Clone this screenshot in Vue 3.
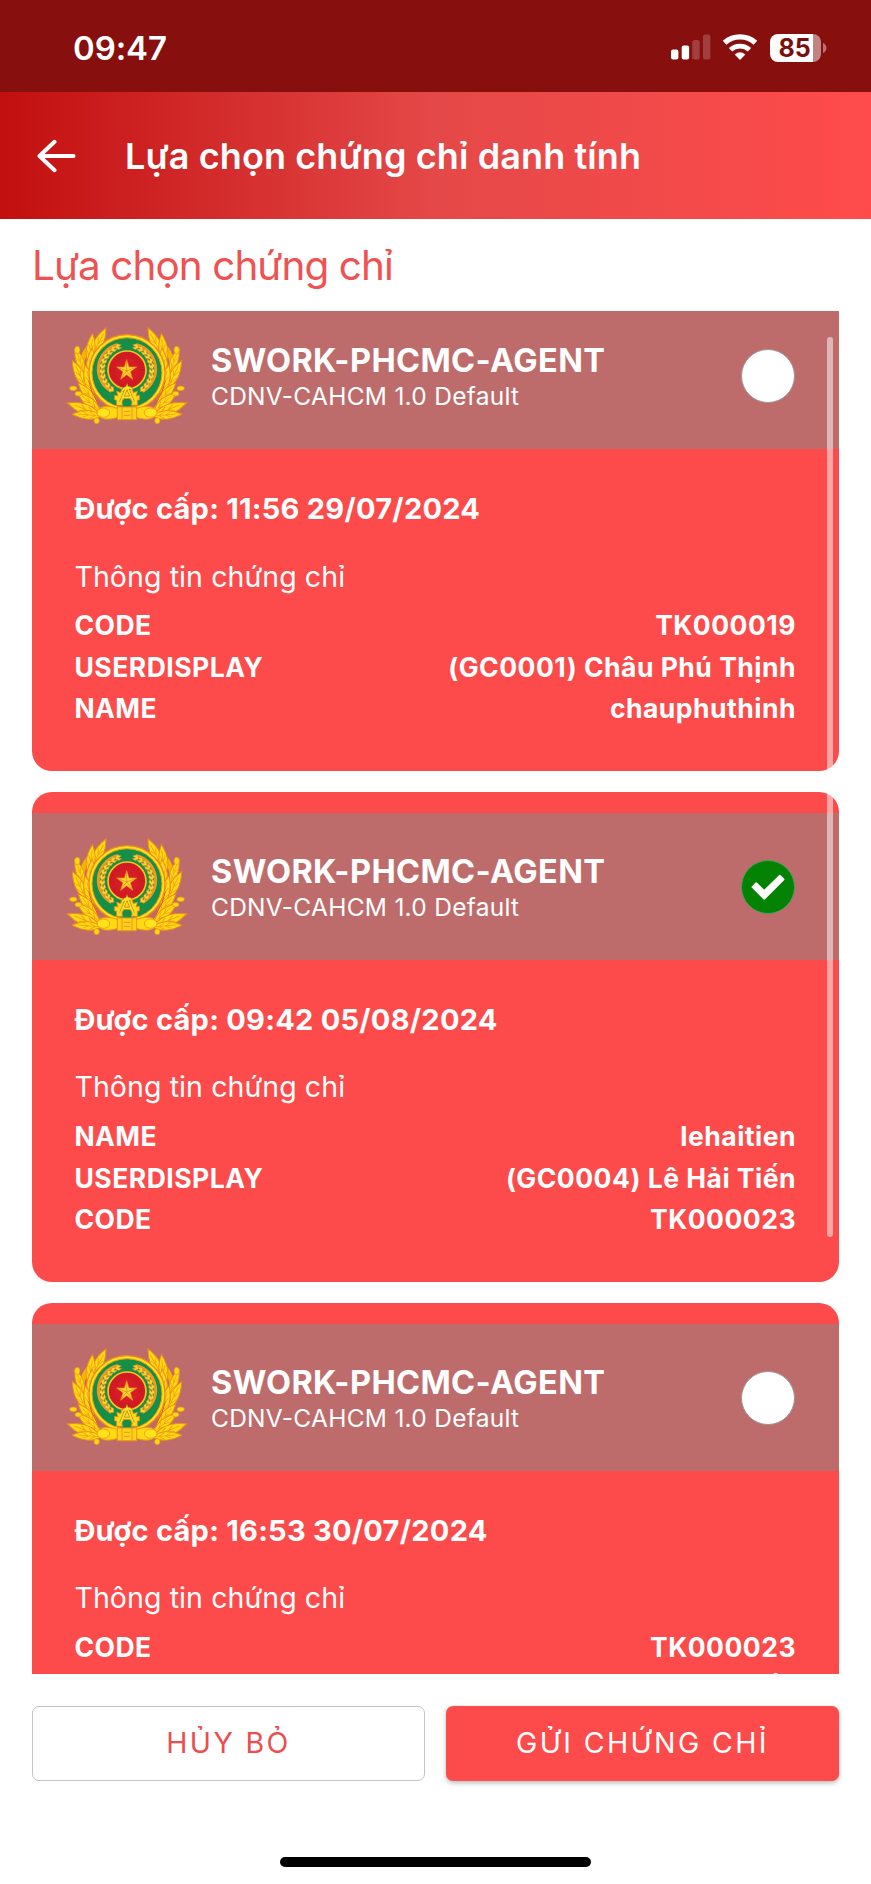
<script setup>
const cards = [
  {
    issued: '11:56 29/07/2024',
    selected: false,
    rows: [
      ['CODE', 'TK000019'],
      ['USERDISPLAY', '(GC0001) Châu Phú Thịnh'],
      ['NAME', 'chauphuthinh'],
    ],
  },
  {
    issued: '09:42 05/08/2024',
    selected: true,
    rows: [
      ['NAME', 'lehaitien'],
      ['USERDISPLAY', '(GC0004) Lê Hải Tiến'],
      ['CODE', 'TK000023'],
    ],
  },
  {
    issued: '16:53 30/07/2024',
    selected: false,
    rows: [
      ['CODE', 'TK000023'],
      ['USERDISPLAY', '(GC0004) Lê Hải Tiến'],
    ],
  },
]

const leaves = [
  { x: 92, y: 140, r: 30, s: 1.4 },
  { x: 84, y: 160, r: 10, s: 1.3 },
  { x: 70, y: 190, r: -18, s: 1.15 },
  { x: 86, y: 205, r: 8, s: 1.3 },
  { x: 76, y: 236, r: -24, s: 1.35 },
  { x: 96, y: 258, r: -12, s: 1.4 },
  { x: 110, y: 288, r: -38, s: 1.3 },
  { x: 118, y: 306, r: -48, s: 1.3 },
  { x: 120, y: 320, r: -66, s: 1.58 },
  { x: 122, y: 320, r: -84, s: 1.3 },
]
const grains = Array.from({ length: 11 }, (_, i) => -52 + i * 12)
</script>

<template>
  <div class="screen">
    <div class="status">
      <span class="clock">09:47</span>
      <div class="indicators">
        <svg class="signal" width="40" height="26" viewBox="0 0 40 26">
          <rect x="0" y="15.5" width="7.4" height="10" rx="2" fill="#fff" />
          <rect x="10.7" y="11.5" width="7.4" height="14" rx="2" fill="#fff" />
          <rect x="21.3" y="6" width="7.4" height="19.5" rx="2" fill="#a13e3e" />
          <rect x="32" y="0.5" width="7.4" height="25" rx="2" fill="#a13e3e" />
        </svg>
        <svg class="wifi" width="34" height="26" viewBox="0 0 34 26">
          <g fill="none" stroke="#fff">
            <path d="M1.6 8.7A23.2 23.2 0 0 1 32.4 8.7" stroke-width="5.4" />
            <path d="M7.5 15.8A14 14 0 0 1 26.5 15.8" stroke-width="4.9" />
          </g>
          <path d="M17 26L11.7 20.6Q17 16 22.3 20.6Z" fill="#fff" />
        </svg>
        <div class="battery">85</div>
        <svg class="nub" width="4" height="10" viewBox="0 0 4 10"><path d="M0 0Q3.4 1.4 3.4 5T0 10Z" fill="#b86f6d" /></svg>
      </div>
    </div>

    <header class="bar">
      <svg class="back" width="40" height="34" viewBox="0 0 40 34">
        <path d="M36.5 17H2.5M17.5 2.8L2.5 17L17.5 31.2" fill="none" stroke="#fff" stroke-width="4" stroke-linecap="round" stroke-linejoin="round" />
      </svg>
      <h1>Lựa chọn chứng chỉ danh tính</h1>
    </header>

    <h2>Lựa chọn chứng chỉ</h2>

    <main class="list">
      <div class="stack">
        <section v-for="(card, i) in cards" :key="i" class="card">
          <div class="band">
            <svg class="emblem" width="124" height="100" viewBox="13 50 372 300">
              <g v-for="side in 2" :key="side" :transform="side === 2 ? 'translate(398 0) scale(-1 1)' : ''">
                <path d="M120 306Q66 260 62 196T96 104" fill="none" stroke="#f7b500" stroke-width="15" />
                <g stroke="#f08a1c" stroke-width="2.2" fill="#ffdc10">
                  <g v-for="(l, k) in leaves" :key="k" :transform="`translate(${l.x} ${l.y}) rotate(${l.r}) scale(${l.s})`">
                    <path d="M0 0Q-20-25-3-68Q20-28 0 0Z" />
                    <path d="M0 0L-1-54M-1-14L-9-28M-1-14L7-28M-1-30L-7-42M-1-30L5-42" fill="none" stroke="#f29a18" stroke-width="1.7" />
                  </g>
                  <ellipse cx="50" cy="122" rx="8" ry="11" />
                  <ellipse cx="38" cy="237" rx="11" ry="7" />
                  <ellipse cx="53" cy="253" rx="10" ry="7" />
                  <ellipse cx="108" cy="334" rx="8" ry="9" />
                </g>
                <path d="M84 214Q91 250 113 284" fill="none" stroke="#e8551e" stroke-width="3" />
              </g>
              <circle cx="199" cy="190" r="114" fill="#ffe21a" stroke="#f08a1c" stroke-width="4" />
              <circle cx="199" cy="190" r="105" fill="#158f48" stroke="#e89a1a" stroke-width="3" />
              <g v-for="side in 2" :key="'w' + side" :transform="side === 2 ? 'translate(398 0) scale(-1 1)' : ''">
                <path d="M152 246A76 76 0 0 1 170 106" fill="none" stroke="#e99b23" stroke-width="9" />
                <path v-for="g in grains" :key="g" :transform="`rotate(${g} 199 182)`" d="M124 190L115 180L123 170L125 180L131 172L133 182Z" fill="#f9d32e" stroke="#e88d22" stroke-width="1.5" />
              </g>
              <circle cx="199" cy="182" r="57" fill="#d61c24" stroke="#f6c31e" stroke-width="5" />
              <circle cx="199" cy="182" r="44" fill="none" stroke="#a9161c" stroke-width="16" stroke-dasharray="2 5" opacity=".45" />
              <path d="M198 151L205 173H228L209 187L216 210L198 196L180 210L187 187L168 173H191Z" fill="#ffd52c" stroke="#e8901c" stroke-width="2" />
              <path d="M198 155V185L214 206M198 185L181 206M198 185L172 175M198 185L224 175" stroke="#c98c18" stroke-width="2" fill="none" />
              <path d="M168 288V272H162V258L172 260L168 246L180 250L184 238H214L218 250L230 246L226 260L236 258V272H230V288H212A15 15 0 1 0 186 288Z" fill="#ffd91c" stroke="#e8901c" stroke-width="2.5" />
              <path d="M180 278L199 232L218 278M185 264H214M184 244Q199 226 214 240" fill="none" stroke="#b88714" stroke-width="9" />
              <path d="M180 278L199 232L218 278M185 264H214M184 244Q199 226 214 240" fill="none" stroke="#ffe02a" stroke-width="5" />
              <path d="M122 294Q142 286 172 298Q199 290 226 298Q256 286 276 294Q296 310 276 326Q256 334 226 324H172Q142 334 122 326Q102 310 122 294Z" fill="#ffda12" stroke="#ef941a" stroke-width="3" />
              <ellipse cx="128" cy="310" rx="19" ry="14" fill="#ffe41c" stroke="#ef941a" stroke-width="2.5" />
              <ellipse cx="270" cy="310" rx="19" ry="14" fill="#ffe41c" stroke="#ef941a" stroke-width="2.5" />
              <path d="M170 293H228V331H170Z" fill="#ffd21a" stroke="#ef941a" stroke-width="3" />
              <path d="M184 293V331M214 293V331M190 306H208M190 318H208" stroke="#ef941a" stroke-width="3" />
            </svg>
            <div class="names">
              <strong>SWORK-PHCMC-AGENT</strong>
              <span class="sub">CDNV-CAHCM 1.0 Default</span>
            </div>
            <div class="radio" :class="{ on: card.selected }">
              <svg v-if="card.selected" width="34" height="27" viewBox="0 0 34 27">
                <path d="M1.8 13L5.2 9.6L13.2 17.4L28.8 2L32.2 5.4L13.2 24.4Z" fill="#fff" stroke="#fff" stroke-width="2.4" stroke-linejoin="round" />
              </svg>
            </div>
          </div>
          <div class="body">
            <p class="issued">Được cấp: {{ card.issued }}</p>
            <p class="info">Thông tin chứng chỉ</p>
            <div v-for="row in card.rows" :key="row[0]" class="row">
              <span>{{ row[0] }}</span><span>{{ row[1] }}</span>
            </div>
          </div>
        </section>
      </div>
      <div class="scrollbar"></div>
    </main>

    <footer class="actions">
      <button class="cancel">HỦY BỎ</button>
      <button class="send">GỬI CHỨNG CHỈ</button>
    </footer>
    <div class="home"></div>
  </div>
</template>

<style>
body {
  margin: 0;
  background: #fff;
}
</style>

<style scoped>
.screen {
  width: 871px;
  height: 1884px;
  overflow: hidden;
  display: flex;
  flex-direction: column;
  font-family: Inter, "Liberation Sans", sans-serif;
  position: relative;
  background: #fff;
}
.status {
  height: 92.4px;
  flex: none;
  background: #870f0d;
  display: flex;
  justify-content: space-between;
  box-sizing: border-box;
  padding: 0 44.5px 0 73px;
  color: #fff;
}
.clock {
  font-size: 33px;
  font-weight: 600;
  line-height: 40px;
  margin-top: 28px;
  letter-spacing: -0.1px;
}
.indicators {
  display: flex;
  align-items: flex-start;
  padding-top: 34px;
}
.wifi {
  margin-left: 12.5px;
}
.battery {
  margin: -0.5px 2px 0 12.5px;
  width: 51px;
  height: 28px;
  border-radius: 8px;
  background: linear-gradient(to right, #fff 43px, #c08583 43px);
  color: #7a0f0d;
  font-weight: 700;
  font-size: 25px;
  line-height: 28px;
  text-indent: 9px;
}
.nub {
  margin-top: 8.5px;
}
.bar {
  height: 126.3px;
  flex: none;
  background: linear-gradient(90deg, #c20f0f 0%, #e54848 50%, #ff4b4b 100%);
  display: flex;
  align-items: center;
  color: #fff;
}
.back {
  margin-left: 37px;
}
h1 {
  margin: 0 0 0 48px;
  font-size: 36px;
  font-weight: 600;
  line-height: 44px;
  letter-spacing: 0.1px;
}
h2 {
  margin: 0;
  height: 92.6px;
  flex: none;
  padding-left: 32px;
  font-size: 40.4px;
  font-weight: 400;
  line-height: 94px;
  letter-spacing: -0.9px;
  color: #ee5253;
}
.list {
  margin: 0 32px;
  height: 1363px;
  flex: none;
  overflow: hidden;
  position: relative;
}
.stack {
  margin-top: -30px;
  display: flex;
  flex-direction: column;
  gap: 20.8px;
}
.card {
  height: 490px;
  flex: none;
  background: #fd4b4b;
  border-radius: 20px;
  box-sizing: border-box;
  padding-top: 21px;
  color: #fff;
}
.band {
  height: 147px;
  background: #be6c6b;
  display: flex;
  align-items: flex-start;
}
.emblem {
  margin: 23.5px 0 0 32.5px;
  flex: none;
  overflow: visible;
}
.names {
  margin: 39px 0 0 22.5px;
  flex: 1;
  display: flex;
  flex-direction: column;
}
.names strong {
  font-size: 32.5px;
  font-weight: 700;
  line-height: 40px;
  letter-spacing: 0.38px;
}
.sub {
  font-size: 24.5px;
  line-height: 31px;
  letter-spacing: 0.27px;
}
.radio {
  width: 54px;
  height: 54px;
  box-sizing: border-box;
  margin: 47px 44px 0 0;
  border-radius: 50%;
  border: 1px solid #9a9a9a;
  background: #fff;
  display: flex;
  align-items: center;
  justify-content: center;
}
.radio.on {
  background: #038203;
  border-color: #4f9a6a;
}
.body {
  padding: 38px 43.5px 0 42.4px;
}
.issued {
  margin: 0;
  font-size: 29px;
  font-weight: 700;
  line-height: 44px;
  letter-spacing: 0.27px;
}
.info {
  margin: 27.4px 0 10.8px;
  font-size: 28.5px;
  line-height: 36px;
  font-weight: 400;
  letter-spacing: 0.1px;
}
.row {
  display: flex;
  justify-content: space-between;
  font-size: 26.5px;
  font-weight: 700;
  line-height: 41.3px;
  letter-spacing: 0.5px;
}
.row span:last-child {
  margin-right: -0.5px;
}
.scrollbar {
  position: absolute;
  right: 6px;
  top: 26px;
  width: 6.4px;
  height: 900px;
  border-radius: 3.2px;
  background: rgba(255, 255, 255, 0.5);
}
.actions {
  display: grid;
  grid-template-columns: 1fr 1fr;
  gap: 21px;
  padding: 31.5px 32px 0;
}
button {
  height: 75px;
  border-radius: 7px;
  border: 0;
  font: 400 28.5px/34px Inter, "Liberation Sans", sans-serif;
  letter-spacing: 2.4px;
}
.cancel {
  border: 1px solid #c4c4c4;
  background: #fff;
  color: #ec4e50;
}
.send {
  background: #fd4b4b;
  color: #fff;
  box-shadow: 0 2px 5px rgba(0, 0, 0, 0.28);
}
.home {
  position: absolute;
  left: 280px;
  bottom: 17px;
  width: 311px;
  height: 10.5px;
  border-radius: 6px;
  background: #000;
}
</style>
